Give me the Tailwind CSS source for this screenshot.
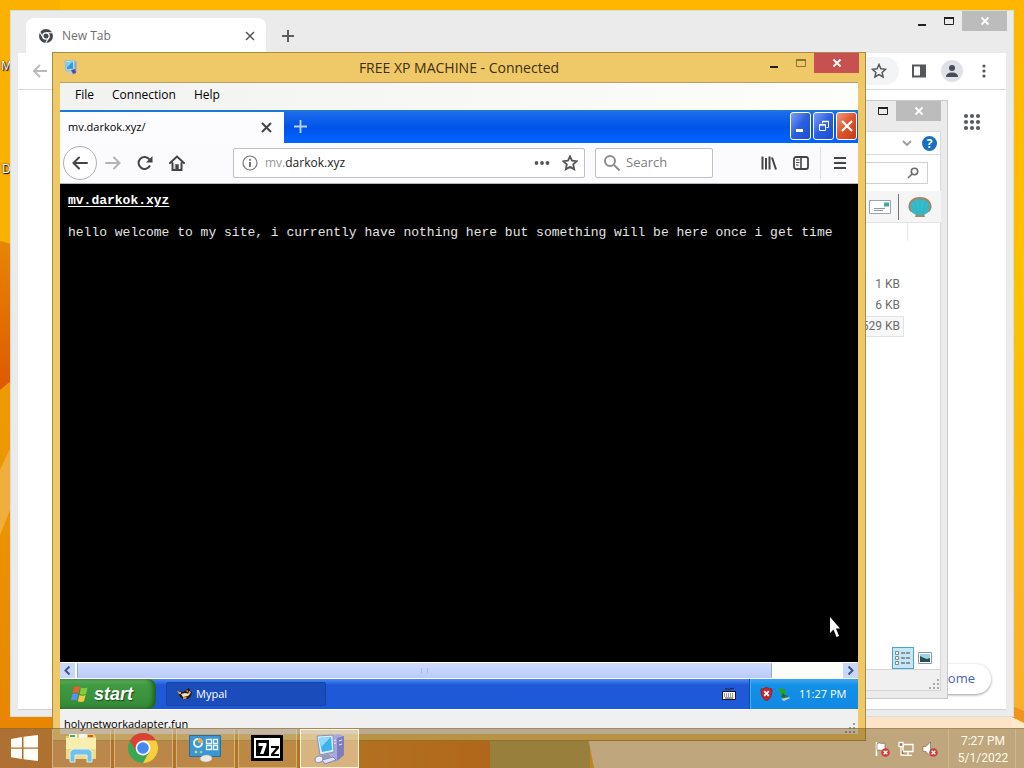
<!DOCTYPE html>
<html lang="en">
<head>
    <meta charset="UTF-8">
    <meta name="viewport" content="width=device-width, initial-scale=1.0">
    <title>FREE XP MACHINE - Connected</title>
    <script src="https://cdn.jsdelivr.net/npm/@tailwindcss/browser@4"></script>
</head>
<body class="relative h-screen overflow-hidden bg-[#f9b000] font-['Open_Sans','Noto_Sans',sans-serif] text-black">

    <!-- Wallpaper -->
    <svg class="absolute inset-0 h-full w-full" viewBox="0 0 1024 768" preserveAspectRatio="none" aria-hidden="true">
        <defs>
            <linearGradient id="sky" x1="0" y1="0" x2="0" y2="1"><stop offset="0" stop-color="#ffb600"/><stop offset=".4" stop-color="#fdc200"/><stop offset="1" stop-color="#f6ae34"/></linearGradient>
            <linearGradient id="petal" x1="0" y1="0" x2="0" y2="1"><stop offset="0" stop-color="#e88600"/><stop offset="1" stop-color="#e05800"/></linearGradient>
            <linearGradient id="stem" x1="0" y1="0" x2="0" y2="1"><stop offset="0" stop-color="#ef9f00"/><stop offset="1" stop-color="#e88600"/></linearGradient>
            <linearGradient id="floor" x1="0" y1="0" x2="1" y2="0"><stop offset="0" stop-color="#dc8c4a"/><stop offset=".6" stop-color="#e4962e"/><stop offset="1" stop-color="#e27a20"/></linearGradient>
        </defs>
        <rect width="1024" height="768" fill="url(#sky)"/>
        <path d="M0 0H60V390H0z" fill="#fbb100"/>
        <path d="M0 241C8 242 20 248 60 270V390H0z" fill="url(#petal)"/>
        <path d="M0 390L60 340V728H0z" fill="url(#stem)"/>
        <path d="M0 470L14 440V500L0 535z" fill="#f0ae3c"/>
        <path d="M0 728H500V768H0z" fill="url(#floor)"/>
        <path d="M490 728H590V768H490z" fill="#b7a75a"/>
        <path d="M584 717H1012L1024 722V768H594z" fill="#fbe9c8"/>
        <path d="M860 717H1012V728H860z" fill="#fde3c8"/>
        <path d="M1012 706L1024 711V723L1012 717z" fill="#f09420"/>
    </svg>
    <span class="absolute left-px top-[58px] text-xs text-white [text-shadow:0_0_2px_#000,1px_1px_1px_#000]">M</span>
    <span class="absolute left-[2px] top-[161px] text-xs text-white [text-shadow:0_0_2px_#000,1px_1px_1px_#000]">D</span>

    <!-- Chrome window -->
    <section class="absolute bottom-[51px] left-[10px] right-[10px] top-[10px] flex flex-col border border-[#d9dbdd] bg-[#ebebeb] px-[7px] pb-[6px]">
        <header class="flex h-[42px] items-end pl-2">
            <div class="flex h-[35px] w-60 items-center rounded-t-lg bg-white pl-3 pr-[10px]">
                <svg class="size-4" viewBox="0 0 16 16" aria-hidden="true"><circle cx="8" cy="8" r="7" fill="#45484d"/><circle cx="8" cy="8" r="3.2" fill="none" stroke="#fff" stroke-width="1.3"/><path d="M8 4.7h6.5M5.2 9.7L2 4.3M10.8 9.6L7.7 15" stroke="#fff" stroke-width="1.1"/></svg>
                <span class="ml-2 flex-1 text-xs text-[#707070]">New Tab</span>
                <button aria-label="Close tab"><svg class="size-3" viewBox="0 0 12 12" fill="none" stroke="#555" stroke-width="1.5"><path d="M2 2l8 8M10 2l-8 8"/></svg></button>
            </div>
            <button class="mb-[10px] ml-[15px]" aria-label="New tab"><svg class="size-[14px]" viewBox="0 0 14 14" stroke="#5c5c5c" stroke-width="2"><path d="M7 1v12M1 7h12"/></svg></button>
            <div class="-mr-px ml-auto flex self-start">
                <button class="grid h-5 w-[27px] place-items-center" aria-label="Minimize"><svg class="size-3" viewBox="0 0 12 12"><path d="M2 9h8v2H2z" fill="#222"/></svg></button>
                <button class="grid h-5 w-[27px] place-items-center" aria-label="Maximize"><svg class="size-3" viewBox="0 0 12 12"><path d="M1.5 2.5h9v7h-9z" fill="none" stroke="#222"/><path d="M1 2h10v2H1z" fill="#222"/></svg></button>
                <button class="grid h-5 w-[45px] place-items-center bg-[#bcbcbc]" aria-label="Close"><svg class="size-[10px]" viewBox="0 0 10 10" stroke="#fff" stroke-width="1.8"><path d="M1.5 1.5l7 7M8.5 1.5l-7 7"/></svg></button>
            </div>
        </header>
        <div class="flex h-[37px] items-center border-b border-[#d4d6d8] bg-white pl-[14px] pr-[14px]">
            <button aria-label="Back"><svg class="size-4" viewBox="0 0 16 16" fill="none" stroke="#b9babc" stroke-width="2"><path d="M15 8H2M8 2L2 8l6 6"/></svg></button>
            <div class="ml-auto flex items-center">
                <button class="mr-3 flex h-7 w-12 items-center justify-end rounded-full bg-[#f3f4f5] pr-3" aria-label="Bookmark this tab"><svg class="size-4" viewBox="0 0 16 16" fill="none" stroke="#54575b" stroke-width="1.5"><path d="M8 1.5l1.9 4.3 4.7.5-3.5 3.1 1 4.6L8 11.6 3.9 14l1-4.6L1.4 6.3l4.7-.5z"/></svg></button>
                <button aria-label="Side panel"><svg class="size-4" viewBox="0 0 16 16"><path d="M2 2.5h12v11H2z" fill="none" stroke="#54575b" stroke-width="2"/><path d="M9 2h6v12H9z" fill="#54575b"/></svg></button>
                <button class="ml-[14px] grid size-[22px] place-items-center rounded-full bg-[#dfe1e6]" aria-label="Profile"><svg class="size-[14px]" viewBox="0 0 14 14" fill="#474c58"><circle cx="7" cy="4" r="3"/><path d="M1 13c0-3 2-4.5 6-4.5S13 10 13 13z"/></svg></button>
                <button class="ml-[13px]" aria-label="Menu"><svg class="size-4" viewBox="0 0 16 16" fill="#54575b"><circle cx="8" cy="3" r="1.6"/><circle cx="8" cy="8" r="1.6"/><circle cx="8" cy="13" r="1.6"/></svg></button>
            </div>
        </div>
        <div class="flex flex-1 flex-col items-end justify-between border-b border-[#cfd3d8] bg-white pb-[15px] pr-[15px] pt-[23px]">
            <button class="mr-[10px]" aria-label="Google apps"><svg class="size-[18px]" viewBox="0 0 18 18" fill="#595b5e"><circle cx="3" cy="3" r="2.1"/><circle cx="9" cy="3" r="2.1"/><circle cx="15" cy="3" r="2.1"/><circle cx="3" cy="9" r="2.1"/><circle cx="9" cy="9" r="2.1"/><circle cx="15" cy="9" r="2.1"/><circle cx="3" cy="15" r="2.1"/><circle cx="9" cy="15" r="2.1"/><circle cx="15" cy="15" r="2.1"/></svg></button>
            <button class="h-[30px] rounded-full bg-white px-4 text-[13px] text-[#4a62b5] shadow-[0_1px_3px_#0006]">Customize Chrome</button>
        </div>
    </section>

    <!-- File Explorer window -->
    <section class="absolute bottom-[69px] right-[76px] top-[100px] flex w-80 flex-col border border-[#c9c9c9] bg-[#ebebeb] pb-[7px] pr-[6px]">
        <header class="flex h-[30px] justify-end">
            <button class="grid h-5 w-[27px] place-items-center" aria-label="Maximize"><svg class="size-3" viewBox="0 0 12 12"><path d="M1.5 2.5h9v7h-9z" fill="none" stroke="#222"/><path d="M1 2h10v2H1z" fill="#222"/></svg></button>
            <button class="grid h-5 w-[45px] place-items-center bg-[#bcbcbc]" aria-label="Close"><svg class="size-[10px]" viewBox="0 0 10 10" stroke="#fff" stroke-width="1.8"><path d="M1.5 1.5l7 7M8.5 1.5l-7 7"/></svg></button>
        </header>
        <div class="flex h-6 items-center justify-end gap-[10px] border-b border-r border-t border-[#dadada] bg-white pr-[3px]">
            <button aria-label="Expand ribbon"><svg class="size-[10px]" viewBox="0 0 10 10" fill="none" stroke="#999" stroke-width="1.8"><path d="M1 3l4 4 4-4"/></svg></button>
            <button class="grid size-[15px] place-items-center rounded-full bg-[#1b6fc0] text-xs font-bold text-white" aria-label="Help">?</button>
        </div>
        <div class="flex h-9 items-center justify-end border-r border-[#dadada] bg-white pr-3">
            <label class="flex h-[22px] w-40 items-center border border-[#d0d0d0] pr-2">
                <input type="search" aria-label="Search files" class="min-w-0 flex-1 outline-none">
                <svg class="size-3" viewBox="0 0 12 12" fill="none" stroke="#6b6b6b" stroke-width="1.6"><circle cx="7.5" cy="4.5" r="3.2"/><path d="M5 7l-4 4"/></svg>
            </label>
        </div>
        <div class="flex h-8 items-center justify-end border-b border-[#e4e4e4] bg-[#f5f5f5] pr-[9px]">
            <svg class="h-[14px] w-[22px]" viewBox="0 0 22 14" aria-hidden="true"><path d="M.5.5h21v13H.5z" fill="#fff" stroke="#9aa4ac"/><path d="M15 2.5h5v4h-5z" fill="#3fa9a5"/><path d="M5 8.500h11M5 10.500h9" stroke="#8a98a5"/></svg>
            <span class="ml-[7px] h-[26px] w-px bg-[#777]"></span>
            <svg class="ml-[9px] h-[22px] w-6" viewBox="0 0 24 22" aria-hidden="true"><path d="M7 21l1-3C3 17 0 14 .5 10 1 4 6 1 12 1s11 3 11.5 9c.5 4-2.500 7-7.500 8l1 3z" fill="#a58462"/><path d="M8 19c-4-2-6-5-5.500-9C3 6 7 3 12 3s9 3 9.500 7c.5 4-1.500 7-5.500 9z" fill="#35bccb"/><path d="M12 19V3M10 19L6 5M14 19l4-14M9 18L3 9M15 18l6-9" stroke="#2aa9b8" stroke-width=".6"/></svg>
        </div>
        <div class="flex-1 border-r border-[#dadada] bg-white pr-9 text-right font-[Roboto,sans-serif] text-xs text-[#6d6d6d]">
            <div class="-mr-1 ml-auto h-[18px] w-px bg-[#e5e5e5]"></div>
            <ul class="pt-[33px] leading-[21px]">
                <li class="pr-1">1 KB</li>
                <li class="pr-1">6 KB</li>
                <li class="border border-[#e2e2e2] bg-[#f8f8f8] pr-[3px] leading-[19px]">529 KB</li>
            </ul>
        </div>
        <div class="flex items-center justify-end gap-1 border-r border-[#dadada] bg-white pr-2">
            <button class="grid size-[22px] place-items-center border border-[#4aa5cf] bg-[#c6e6f5]" aria-label="Details view"><svg class="size-4" viewBox="0 0 16 16" fill="none" stroke="#444"><path d="M.5 1.500h3v3h-3zM.5 6.500h3v3h-3zM.5 11.500h3v3h-3z" fill="#fff" stroke="#7c8a92"/><path d="M6 3h4m1 0h4M6 8h4m1 0h4M6 13h4m1 0h4"/></svg></button>
            <button aria-label="Thumbnail view"><svg class="h-3 w-[14px]" viewBox="0 0 14 12"><path d="M.5.5h13v11H.5z" fill="#fff" stroke="#89a"/><path d="M2 2h10v8H2z" fill="#9fd3e8"/><path d="M2 4l4 2 3 1 3-1v4H2z" fill="#28504c"/></svg></button>
        </div>
        <div class="flex h-[22px] items-end justify-end border border-[#d5d5d5] bg-[#f0f0f0] p-px">
            <svg class="size-[10px]" viewBox="0 0 10 10" fill="#aaa" aria-hidden="true"><path d="M8 0h2v2H8zM8 4h2v2H8zM8 8h2v2H8zM4 4h2v2H4zM4 8h2v2H4zM0 8h2v2H0z"/></svg>
        </div>
    </section>

    <!-- Remote machine window -->
    <section class="absolute bottom-[27px] left-[52px] right-[158px] top-[52px] flex flex-col border border-[#a88c46] bg-[#efc868] px-[7px] pb-[6px]">
        <header class="relative flex h-[29px] items-center">
            <svg class="ml-[3px] size-4" viewBox="0 0 16 16" aria-hidden="true"><path d="M2 1l9-1 1 10-9 1z" fill="#d6ebf7" stroke="#6c9fc4" stroke-width=".6"/><path d="M3.2 2.300l6.600-.8.7 7.300-6.600.8z" fill="#29a0df"/><path d="M3.200 2.300l6.600-.8-6 6z" fill="#7fd0f4"/><path d="M12 1l1.500 1v10l-2 2-1-4 1.500-1z" fill="#8c9fd0"/><path d="M4 12l6-2 1 3-4 2.500z" fill="#c4c9da"/><path d="M8 10l4-1 1 4-3 1z" fill="#574f9e"/></svg>
            <h1 class="absolute inset-x-0 text-center text-sm text-[#3f2f0c]">FREE XP MACHINE - Connected</h1>
            <div class="relative -mr-px ml-auto flex self-start">
                <button class="grid h-5 w-[27px] place-items-center" aria-label="Minimize"><svg class="size-3" viewBox="0 0 12 12"><path d="M2 9h8v2H2z" fill="#222"/></svg></button>
                <button class="grid h-5 w-[27px] place-items-center" aria-label="Maximize"><svg class="size-3" viewBox="0 0 12 12"><path d="M1.5 2.500h9v7h-9z" fill="none" stroke="#8d7434"/><path d="M1 2h10v2H1z" fill="#8d7434"/></svg></button>
                <button class="grid h-5 w-[45px] place-items-center bg-[#c75050]" aria-label="Close"><svg class="size-[10px]" viewBox="0 0 10 10" stroke="#fff" stroke-width="1.8"><path d="M1.5 1.5l7 7M8.5 1.5l-7 7"/></svg></button>
            </div>
        </header>
        <nav class="flex h-7 items-center gap-[18px] border-t border-[#b3a172] bg-linear-to-r from-[#f2f2f1] to-[#fdfefa] pb-1 pl-[15px] text-xs">
            <button>File</button>
            <button>Connection</button>
            <button>Help</button>
        </nav>

        <!-- Mypal browser -->
        <div class="flex h-[33px] items-stretch border-t-2 border-[#1c78d6] bg-linear-to-b from-[#1c6cea] via-[#0053ea] to-[#0066ff]">
            <div class="flex w-56 items-center justify-between bg-[#fcfbfd] pl-2 pr-3 text-[11px]">
                <span>mv.darkok.xyz/</span>
                <button aria-label="Close tab"><svg class="size-[11px]" viewBox="0 0 11 11" stroke="#444" stroke-width="2"><path d="M1 1l9 9M10 1l-9 9"/></svg></button>
            </div>
            <button class="mb-[2px] ml-[9px] self-center" aria-label="New tab"><svg class="size-[15px]" viewBox="0 0 15 15" stroke="#b9d2ff" stroke-width="1.8"><path d="M7.5 1v13M1 7.500h13"/></svg></button>
            <div class="mb-1 ml-auto flex items-center gap-[2px] pr-px">
                <button class="grid h-7 w-[21px] place-items-center rounded-[3px] border border-white bg-linear-to-br from-[#7e9ff0] via-[#2b5ee0] to-[#1b4fd0]" aria-label="Minimize"><svg class="size-4" viewBox="0 0 16 16"><path d="M3 11h7v3H3z" fill="#fff"/></svg></button>
                <button class="grid h-7 w-[21px] place-items-center rounded-[3px] border border-white bg-linear-to-br from-[#7e9ff0] via-[#2b5ee0] to-[#1b4fd0]" aria-label="Restore"><svg class="size-4" viewBox="0 0 16 16" fill="none" stroke="#fff"><path d="M6.500 5.500v-2h6v6h-2M3.500 6.500h6v6h-6z"/><path d="M6 3.500h7M3 7h7" stroke-width="1.600"/></svg></button>
                <button class="grid h-7 w-[21px] place-items-center rounded-[3px] border border-white bg-linear-to-br from-[#ee9676] via-[#e0522c] to-[#c43a14]" aria-label="Close"><svg class="size-4" viewBox="0 0 16 16" stroke="#fff" stroke-width="2.2"><path d="M3 3l10 10M13 3L3 13"/></svg></button>
            </div>
        </div>
        <div class="flex h-[41px] items-center border-b border-[#b8b8b8] bg-[#fbfafc] pl-[3px] pr-[2px]">
            <button class="grid size-[34px] place-items-center rounded-full border border-[#b0b0b0] bg-white" aria-label="Back"><svg class="size-4" viewBox="0 0 16 16" fill="none" stroke="#444" stroke-width="2" stroke-linecap="round"><path d="M15 8H1.500M7 2.500L1.500 8 7 13.500"/></svg></button>
            <button class="grid h-8 w-8 place-items-center" aria-label="Forward"><svg class="size-4" viewBox="0 0 16 16" fill="none" stroke="#b4b4b4" stroke-width="2" stroke-linecap="round"><path d="M1 8h13.500M9 2.500L14.500 8 9 13.500"/></svg></button>
            <button class="grid h-8 w-8 place-items-center" aria-label="Reload"><svg class="size-4" viewBox="0 0 16 16" fill="none" stroke="#444" stroke-width="2"><path d="M13 10.500A6 6 0 1 1 12.500 4.500"/><path d="M15.500 1v6.500H9z" fill="#444" stroke="none"/></svg></button>
            <button class="grid h-8 w-8 place-items-center" aria-label="Home"><svg class="size-4" viewBox="0 0 16 16" fill="none" stroke="#444" stroke-width="2" stroke-linecap="round"><path d="M1 8l7-6.500L15 8M3.500 8v7h9V8"/><path d="M6.500 9.500h3V15h-3z" fill="#444" stroke-width=".5"/></svg></button>
            <div class="ml-10 flex h-[30px] min-w-0 flex-1 items-center rounded-[2px] border border-[#c0c0c0] bg-white px-2">
                <svg class="size-4" viewBox="0 0 16 16" fill="none" stroke="#777" aria-hidden="true"><circle cx="8" cy="8" r="7" stroke-width="1.2"/><path d="M8 7v5M8 4v1.700" stroke-width="2"/></svg>
                <label class="relative ml-[7px] flex-1 text-xs">
                    <input type="text" aria-label="Address" value="mv.darkok.xyz" class="w-full bg-transparent text-transparent outline-none">
                    <span class="pointer-events-none absolute inset-0 text-[#222]"><span class="text-[#999]">mv.</span>darkok.xyz</span>
                </label>
                <button aria-label="Page actions"><svg class="size-4" viewBox="0 0 16 16" fill="#555"><circle cx="2.500" cy="8" r="1.900"/><circle cx="8" cy="8" r="1.900"/><circle cx="13.500" cy="8" r="1.900"/></svg></button>
                <button class="-mr-[2px] ml-3" aria-label="Bookmark"><svg class="size-4" viewBox="0 0 16 16" fill="none" stroke="#555" stroke-width="1.8"><path d="M8 1.300l2 4.400 4.800.5-3.600 3.200 1 4.900L8 11.900l-4.200 2.400 1-4.900L1.200 6.200 6 5.700z"/></svg></button>
            </div>
            <label class="ml-[10px] flex h-[30px] w-[118px] items-center rounded-[2px] border border-[#c0c0c0] bg-white pl-2">
                <svg class="size-4" viewBox="0 0 16 16" fill="none" stroke="#8c8c8c" stroke-width="2" aria-hidden="true"><circle cx="6" cy="6" r="5"/><path d="M10 10l5.500 5.500"/></svg>
                <input type="text" aria-label="Search" placeholder="Search" class="ml-[6px] min-w-0 flex-1 text-[13px] outline-none placeholder:text-[#808080]">
            </label>
            <button class="ml-10 grid h-8 w-8 place-items-center" aria-label="Library"><svg class="size-4" viewBox="0 0 16 16" stroke="#444" stroke-width="2"><path d="M1.500 1.500v13M5 3v11.500M8.500 1.500v13M11 2.500l4 12"/></svg></button>
            <button class="grid h-8 w-8 place-items-center" aria-label="Sidebars"><svg class="size-4" viewBox="0 0 16 16" fill="none" stroke="#444"><rect x="1" y="2" width="14" height="12" rx="2" stroke-width="1.800"/><path d="M8 2v12" stroke-width="1.600"/><path d="M3 5h3.500M3 7.500h3.500M3 10h2.500"/></svg></button>
            <span class="mx-[3px] h-8 w-px bg-[#e0dfe3]"></span>
            <button class="grid h-8 w-8 place-items-center" aria-label="Menu"><svg class="size-4" viewBox="0 0 16 16" stroke="#444" stroke-width="2"><path d="M2 3h12M2 8h12M2 13h12"/></svg></button>
        </div>
        <main class="relative flex-1 overflow-hidden whitespace-nowrap bg-black pl-2 pt-[9px] font-['Liberation_Mono',monospace] text-[13px] leading-4 text-[#e4e4e4]">
            <h2 class="font-bold text-white underline underline-offset-2">mv.darkok.xyz</h2>
            <p class="mt-4">hello welcome to my site, i currently have nothing here but something will be here once i get time</p>
            <svg class="absolute bottom-6 right-[17px] h-[22px] w-3" viewBox="0 0 12 22" fill="#fff" aria-hidden="true"><path d="M1 1v16l3.500-3.500 3 7.500 2.500-1-3-7.500H11z"/></svg>
        </main>
        <div class="flex h-[17px] border-y border-white bg-[#fcfcf8]">
            <button class="grid w-[15px] place-items-center bg-[#c9d7fb]" aria-label="Scroll left"><svg class="size-[9px]" viewBox="0 0 9 9" fill="none" stroke="#3f5686" stroke-width="2"><path d="M6.500.5l-4 4 4 4"/></svg></button>
            <div class="ml-[2px] mr-[71px] grid flex-1 place-items-center rounded-[1px] border-x border-[#8fa9dd] bg-linear-to-b from-[#d0dcff] to-[#b9cbf8]"><span class="h-[5px] w-[7px] border-x border-[#a5b9ea]"></span></div>
            <button class="grid w-[15px] place-items-center bg-[#c9d7fb]" aria-label="Scroll right"><svg class="size-[9px]" viewBox="0 0 9 9" fill="none" stroke="#3f5686" stroke-width="2"><path d="M2.500.5l4 4-4 4"/></svg></button>
        </div>

        <!-- XP taskbar -->
        <div class="flex h-[30px] items-stretch bg-linear-to-b from-[#4a8cf0] via-[#1f58d8] via-20% to-[#1c5ad8] text-[11px] text-white">
            <button class="flex w-24 items-center gap-[5px] rounded-r-lg bg-linear-to-b from-[#67b567] via-[#3f9a42] via-20% to-[#348a36] pl-[11px] font-['Liberation_Sans',sans-serif] text-lg font-bold italic leading-none shadow-[inset_-3px_0_4px_#1c5f1f]">
                <svg class="h-[18px] w-[18px]" viewBox="0 0 18 18" aria-hidden="true"><path d="M3 2c2-1 4-1 6 0L7.500 8.200c-2-1-4-1-6 0z" fill="#e8602c"/><path d="M10 2.500c2 1 4 1 6.500 0L15 9c-2 1-4.500 1-6.300 0z" fill="#84cc3e"/><path d="M1.300 9.200c2-1 4-1 6 0L5.800 15.500c-2-1-4-1-6 0z" fill="#5b90f2"/><path d="M8.400 9.900c2 1 4 1 6.300 0L13 16.300c-2 1-4 1-6.200 0z" fill="#f6ca3d"/></svg>
                <span class="[text-shadow:1px_1px_1px_#1b4d1c]">start</span>
            </button>
            <button class="my-[3px] ml-[10px] flex w-40 items-center gap-[3px] rounded-[2px] border border-[#1644a4] bg-[#1a4dbb] pl-[10px]">
                <svg class="size-4" viewBox="0 0 16 16" aria-hidden="true"><path d="M1 5l5 1 6-4 1 3 2 1-1 4-3 3H6L3 11z" fill="#201a12"/><path d="M4 8l4-1 5 1-2 2-5 1z" fill="#f0dfc0"/><path d="M6 11h4l-1 2H6zM8 5l3-1v2z" fill="#d58a3c"/><path d="M0 5l4 1v2L2 8z" fill="#cfa569"/><path d="M12 5l2 1-1 2h-2z" fill="#e8b070"/></svg>
                Mypal
            </button>
            <svg class="ml-auto mr-[13px] h-[14px] w-[14px] self-center" viewBox="0 0 14 14" aria-hidden="true"><path d="M3 2c2-1 3 1 5 0s3 0 4-1" stroke="#222" fill="none"/><path d="M0 4h14v9H0z" fill="#16181c"/><path d="M1 5h12v7H1z" fill="#f3f3f3"/><path d="M2 7h10M2 9h10" stroke="#444" stroke-dasharray="1 1"/><path d="M3 11h8" stroke="#444"/></svg>
            <div class="flex w-[109px] items-center border-l border-[#0b4cae] bg-linear-to-b from-[#3ba6f0] via-[#1290e8] via-20% to-[#1189e2] pl-[10px] shadow-[inset_1px_0_0_#3fb8f8]">
                <svg class="h-[14px] w-[13px]" viewBox="0 0 14 15" aria-hidden="true"><path d="M7 0c2 1.500 4 2 6 2 0 6-1 10-6 13C2 12 1 8 1 2c2 0 4-.5 6-2z" fill="#c9242c" stroke="#7e1218" stroke-width=".6"/><path d="M4.500 4.500l5 5M9.500 4.500l-5 5" stroke="#fff" stroke-width="2"/></svg>
                <svg class="ml-1 size-[14px]" viewBox="0 0 14 14" aria-hidden="true"><path d="M1 1l7 1 1 5-5 1z" fill="#2aa02c"/><path d="M6 6l3 3-1 2-4-1" fill="#1c6a28"/><path d="M4 12l8-2 1 1-6 3z" fill="#c8cdb8"/><path d="M9 8l2 1-1 2z" fill="#4a4a4a"/></svg>
                <time class="ml-2">11:27 PM</time>
            </div>
        </div>
        <footer class="flex h-[25px] items-center border-t border-white bg-[#f0f0f0] pl-1 pt-1 text-[11px]">
            holynetworkadapter.fun
            <svg class="ml-auto mr-[3px] mt-2 size-[10px]" viewBox="0 0 10 10" fill="#999" aria-hidden="true"><path d="M8 0h2v2H8zM8 4h2v2H8zM8 8h2v2H8zM4 4h2v2H4zM4 8h2v2H4zM0 8h2v2H0z"/></svg>
        </footer>
    </section>

    <!-- Taskbar -->
    <footer class="absolute inset-x-0 bottom-0 flex h-10 items-stretch border-t border-[#8a6a30]/50 bg-[#6e4b14]/42">
        <button class="grid w-[52px] place-items-center pb-[2px] pr-1" aria-label="Start"><svg class="h-[26px] w-[27px]" viewBox="0 0 27 26" fill="#fffdf5"><path d="M0 4l11-2v10.500H0zM12.500 1.700L27 0v12.500H12.500zM0 13.800h11V24L0 22.300zM12.500 13.800H27V26l-14.500-1.800z"/></svg></button>
        <div class="flex gap-[3px]">
            <button class="grid w-[59px] place-items-center border border-t-0 border-[#e6cd9c]/60 bg-white/15 pr-[2px]" aria-label="File Explorer">
                <svg class="size-8" viewBox="0 0 32 32"><path d="M1 4h5l2-2h21l2 3v22H1z" fill="#e9cd6a"/><path d="M4 2h8v5H4z" fill="#f4f4ea"/><path d="M5 3h5v2H5z" fill="#53a94c"/><path d="M14 2h8v5h-8z" fill="#f4f4ea"/><path d="M23 3h5v2h-5z" fill="#d9572e"/><path d="M1 6h30v21H1z" fill="#faeeaf"/><path d="M1 17h30v10H1z" fill="#f3db83"/><path d="M5 30V20l3-3h16l3 3v10h-5v-7H10v7z" fill="#6fc2ea" stroke="#d8f1fb"/></svg>
            </button>
            <button class="grid w-[59px] place-items-center border border-t-0 border-[#e6cd9c]/60 bg-white/15 pr-[2px]" aria-label="Google Chrome">
                <svg class="size-8" viewBox="0 0 32 32"><circle cx="16" cy="16" r="15" fill="#3aa757"/><path d="M3 8.500A15 15 0 0 1 29 8.500H16L9.500 19.800z" fill="#dd4133"/><path d="M16 8.500h13A15 15 0 0 1 16 31l6.500-11.200z" fill="#fbcd3b"/><circle cx="16" cy="16" r="7.400" fill="#fff"/><circle cx="16" cy="16" r="5.800" fill="#4688f1"/></svg>
            </button>
            <button class="grid w-[59px] place-items-center border border-t-0 border-[#e6cd9c]/60 bg-white/15 pr-[2px]" aria-label="Control Panel">
                <svg class="size-8" viewBox="0 0 32 32"><path d="M.5 3.500h31v21H.5z" fill="#3a97d4" stroke="#226fa8"/><circle cx="9" cy="11" r="4" fill="none" stroke="#e8f5ff" stroke-width="2"/><path d="M9 11V6a5 5 0 0 1 5 5z" fill="#f6a93b"/><path d="M17.500 7.500h5v4h-5zM24.500 7.500h4v4h-4zM17.500 13.500h5v4h-5zM24.500 13.500h4v4h-4z" fill="none" stroke="#eaf7ff" stroke-width="1.300"/><circle cx="7" cy="20" r="1.300" fill="#f4d35c"/><circle cx="12" cy="20" r="1.300" fill="#9be081"/><path d="M11 27c0-4 11-6 12-1 0 5-11 5-12 1z" fill="#ece8e4" stroke="#b6ada6" stroke-width=".5"/></svg>
            </button>
            <button class="grid w-[59px] place-items-center border border-t-0 border-[#e6cd9c]/60 bg-white/15 pr-[2px]" aria-label="7-Zip">
                <svg class="size-8" viewBox="0 0 32 32"><path d="M1.500 4.500h29v23h-29z" fill="#fff" stroke="#000" stroke-width="3"/><path d="M5 8h13v16H5z"/><path d="M7.500 11h8v2.500L12.500 22H9l3-8H7.500z" fill="#fff"/><path d="M20 14h8v2l-5 6h5v2h-8v-2l5-6h-5z"/></svg>
            </button>
            <button class="grid w-[59px] place-items-center border border-[#fff3d8] bg-[#fff3dc]/50 pr-[2px]" aria-label="Remote Desktop">
                <svg class="size-8" viewBox="0 0 32 32"><path d="M18 3l7-2 6 2v19l-8 7-5-3z" fill="#a9a8dc"/><path d="M24 5l7-2v19l-7 6z" fill="#7f7dc0"/><path d="M19 8l4-1M19 11l4-1M26 8l3-1M26 12l3-1" stroke="#e5e7fa"/><path d="M4 3l16-1 1 17-14 3z" fill="#dcebf8" stroke="#7b93c4"/><path d="M6 5l12-1 1 13-10 2z" fill="#3bb2ea"/><path d="M6 5l12-1-10 10z" fill="#8fdaf8"/><path d="M9 22l7-1 2 3-8 2z" fill="#8f98c9"/><path d="M2 27c0-5 8-5 8-1s-8 5-8 1z" fill="#eceef8" stroke="#7b83b8"/><path d="M9 27l11-3 3 3-11 4z" fill="#dce2f4" stroke="#7983ba"/></svg>
            </button>
        </div>
        <div class="ml-auto flex items-center text-xs text-[#fff9ea]">
            <div class="flex gap-2 pr-[10px]">
                <svg class="size-4" viewBox="0 0 16 16" role="img" aria-label="Action Center"><path d="M2.500 1v14" stroke="#fff" stroke-width="1.600"/><path d="M3 2.500c3-1.500 4 1 8-.5v7c-4 1.500-5-1-8 .5z" fill="#fff" stroke="#5f4a28" stroke-width=".5"/><circle cx="11.500" cy="11.500" r="4.300" fill="#cf3c3c"/><path d="M9.700 9.700l3.600 3.600M13.300 9.700l-3.600 3.600" stroke="#fff" stroke-width="1.400"/></svg>
                <svg class="size-4" viewBox="0 0 16 16" fill="none" stroke="#fff" stroke-width="1.3" role="img" aria-label="Network"><path d="M5 3.500h10v7H5zM10 11v3M6 14.300h8"/><path d="M1 1.500h4v4H1zM3 6v8h3" fill="#8a7448"/></svg>
                <svg class="size-4" viewBox="0 0 16 16" role="img" aria-label="Volume muted"><path d="M1 5.500h3L8.500 1v14L4 10.500H1z" fill="#fff" stroke="#5f4a28" stroke-width=".5"/><circle cx="11.500" cy="11.500" r="4.300" fill="#cf3c3c"/><path d="M9.700 9.700l3.600 3.600M13.300 9.700l-3.600 3.600" stroke="#fff" stroke-width="1.400"/></svg>
            </div>
            <div class="h-full w-[68px] border-x border-[#e8d5a6]/40 pl-[2px] pt-1 text-center font-[Roboto,sans-serif] leading-[17px]">
                <div>7:27 PM</div>
                <div>5/1/2022</div>
            </div>
            <button class="h-full w-2" aria-label="Show desktop"></button>
        </div>
    </footer>
</body>
</html>
